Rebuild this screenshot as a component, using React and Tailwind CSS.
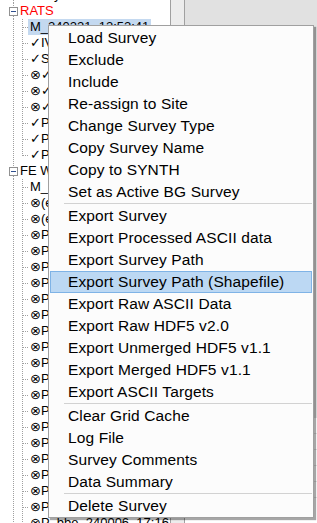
const ratsKids = [
  "M_240221_12:52:41",
  "✓IVR_240221_13:05:12",
  "✓SVY_240221_13:20:44",
  "⊗✓P_240221_13:41:02",
  "⊗✓P_240221_13:58:20",
  "⊗✓P_240221_14:10:37",
  "✓P_240221_14:25:51",
  "✓P_240221_14:40:09",
  "✓P_240221_14:55:30",
];

const feKids = [
  "M_240305_09:12:08",
  "⊗(e)_240305_09:30:11",
  "⊗(e)_240305_09:47:52",
  ...Array.from({ length: 18 }, (_, i) => `⊗P_aaa_2400${10 + i}_10:${10 + i}`),
  "⊗P_bbe_240006_17:16",
];

const menu = [
  "Load Survey",
  "Exclude",
  "Include",
  "Re-assign to Site",
  "Change Survey Type",
  "Copy Survey Name",
  "Copy to SYNTH",
  "Set as Active BG Survey",
  "-",
  "Export Survey",
  "Export Processed ASCII data",
  "Export Survey Path",
  "Export Survey Path (Shapefile)",
  "Export Raw ASCII Data",
  "Export Raw HDF5 v2.0",
  "Export Unmerged HDF5 v1.1",
  "Export Merged HDF5 v1.1",
  "Export ASCII Targets",
  "-",
  "Clear Grid Cache",
  "Log File",
  "Survey Comments",
  "Data Summary",
  "-",
  "Delete Survey",
];

function Lines({ root, last }) {
  return (
    <svg width="29" height="16" className="shrink-0" shapeRendering="crispEdges">
      {root ? (
        <>
          <line x1="13.5" y1="0" x2="13.5" y2="4" stroke="#a0a0a0" strokeDasharray="1 1" />
          <line x1="13.5" y1="13" x2="13.5" y2="16" stroke="#a0a0a0" strokeDasharray="1 1" />
          <rect x="9.5" y="4.5" width="8" height="8" fill="#fff" stroke="#919191" />
          <line x1="11" y1="8.5" x2="16" y2="8.5" stroke="#2f4f8f" />
        </>
      ) : (
        <>
          <line x1="13.5" y1="0" x2="13.5" y2="16" stroke="#a0a0a0" strokeDasharray="1 1" />
          <line x1="22.5" y1="0" x2="22.5" y2={last ? 9 : 16} stroke="#a0a0a0" strokeDasharray="1 1" />
          <line x1="23" y1="8.5" x2="28" y2="8.5" stroke="#a0a0a0" strokeDasharray="1 1" />
        </>
      )}
    </svg>
  );
}

function RootRow({ label, red }) {
  return (
    <div className="flex h-[16px] items-center whitespace-nowrap">
      <Lines root />
      <span className={red ? "-ml-[9px] text-[#ff0000]" : "-ml-[9px]"}>{label}</span>
    </div>
  );
}

function KidRow({ label, last, selected }) {
  return (
    <div className="flex h-[16px] items-center whitespace-nowrap">
      <Lines last={last} />
      <span className={selected ? "-ml-[1px] px-[2px] bg-[#c4d9f0]" : "ml-[1px]"}>{label}</span>
    </div>
  );
}

export default function App() {
  return (
    <div className="relative flex h-[523px] w-[317px] overflow-hidden bg-[#e1e1e1] font-['Liberation_Sans','DejaVu_Sans',sans-serif] text-black">
      <div className="w-[171px] shrink-0 overflow-hidden border-r border-[#a0a0a0] bg-white text-[13px] leading-[16px]">
        <div className="-mt-[13px]">
          <RootRow label="Survey" />
          <RootRow label="RATS" red />
          {ratsKids.map((k, i) => (
            <KidRow key={k} label={k} selected={i === 0} last={i === ratsKids.length - 1} />
          ))}
          <RootRow label="FE WEST" />
          {feKids.map((k) => (
            <KidRow key={k} label={k} />
          ))}
        </div>
      </div>
      <div className="w-[14px] shrink-0 border-r border-[#a0a0a0] bg-[#ececec]" />
      <div className="flex flex-1 flex-col">
        <div className="h-[418px] bg-[#e1e1e1]" />
        <div className="flex flex-1 flex-col bg-white text-[13px] leading-[16px]">
          {[0, 1, 2, 3, 4].map((r) => (
            <div key={r} className="flex h-[16px] border-b border-[#e4e4e4]">
              <div className="w-[20px] border-r border-[#d6d6d6]" />
              <div className="w-[52px] border-r border-[#d6d6d6]" />
              <div className="w-[20px] border-r border-[#d6d6d6]" />
              <div className="flex-1" />
            </div>
          ))}
          <div className="flex h-[16px] whitespace-nowrap pt-[2px]">
            <div className="w-[20px] border-r border-[#d6d6d6]" />
            <div className="w-[52px] border-r border-[#d6d6d6] pl-[30px]">xxx</div>
            <div className="w-[20px] border-r border-[#d6d6d6] pl-[4px]">nb</div>
            <div className="flex-1 pl-[4px]">aya</div>
          </div>
        </div>
      </div>

      <div className="absolute left-[48px] top-[25px] w-[266px] border border-[#a0a0a0] bg-[#fcfcfc] px-[1px] pt-[1px] text-[15.5px] tracking-[0.12px] shadow-[2px_2px_1px_rgba(0,0,0,0.35)]">
        {menu.map((m, i) =>
          m === "-" ? (
            <div key={i} className="h-[2px]">
              <div className="ml-[14px] h-px bg-[#d2d2d2]" />
            </div>
          ) : m === "Export Survey Path (Shapefile)" ? (
            <div key={i} className="flex h-[22px] items-center whitespace-nowrap border border-[#7fb3e6] bg-[#bcd8f3] pl-[17px]">
              {m}
            </div>
          ) : (
            <div key={i} className="flex h-[22px] items-center whitespace-nowrap pl-[18px]">
              {m}
            </div>
          )
        )}
      </div>
    </div>
  );
}
